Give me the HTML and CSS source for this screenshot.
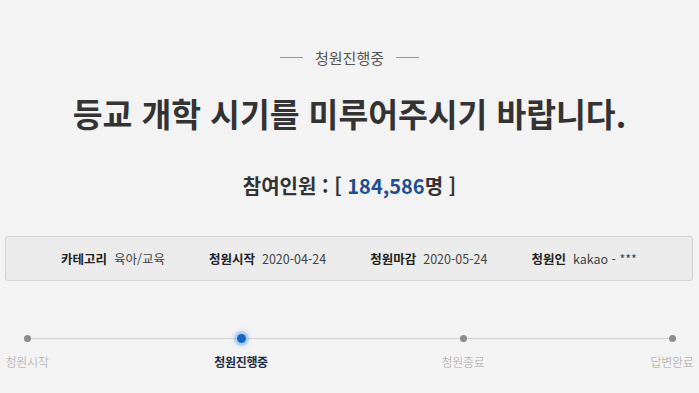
FILE: index.html
```html
<!DOCTYPE html>
<html lang="ko">
<head>
    <meta charset="UTF-8">
    <meta name="viewport" content="width=device-width, initial-scale=1.0">
    <title>청원진행중</title>
    <link rel="stylesheet" href="styles.css">
</head>
<body>
    <div class="petition">
        <div class="status-head">
            <span class="dash"></span>
            <span>청원진행중</span>
            <span class="dash"></span>
        </div>

        <h1 class="title">등교 개학 시기를 미루어주시기 바랍니다.</h1>

        <div class="count">
            참여인원 : [ <span class="num">184,586</span>명 ]
        </div>

        <div class="info">
            <div class="item"><span class="label">카테고리</span><span class="value">육아/교육</span></div>
            <div class="item"><span class="label">청원시작</span><span class="value">2020-04-24</span></div>
            <div class="item"><span class="label">청원마감</span><span class="value">2020-05-24</span></div>
            <div class="item"><span class="label">청원인</span><span class="value">kakao - ***</span></div>
        </div>

        <div class="progress">
            <div class="track"></div>
            <div class="step s1"><span class="dot"></span><span class="name">청원시작</span></div>
            <div class="step s2 active"><span class="dot"></span><span class="name">청원진행중</span></div>
            <div class="step s3"><span class="dot"></span><span class="name">청원종료</span></div>
            <div class="step s4"><span class="dot"></span><span class="name">답변완료</span></div>
        </div>
    </div>
</body>
</html>
```

FILE: styles.css
```css
body {
    margin: 0;
    padding: 0;
    font-family: "Noto Sans CJK KR", "Noto Sans", sans-serif;
    background-color: #f3f3f3;
    color: #333;
    overflow: hidden;
}

.petition {
    width: 699px;
    padding-top: 47px;
    text-align: center;
}

.status-head {
    display: flex;
    justify-content: center;
    align-items: center;
    gap: 12px;
    height: 20px;
    font-size: 15px;
    color: #555;
}

.status-head .dash {
    width: 23px;
    height: 1px;
    background-color: #999;
}

.title {
    margin: 26px 0 0;
    font-size: 32.4px;
    line-height: 40px;
    font-weight: bold;
    color: #333;
}

.count {
    margin-top: 39px;
    font-size: 20px;
    line-height: 28px;
    font-weight: bold;
    color: #333;
}

.count .num {
    color: #1d4f91;
}

.info {
    display: flex;
    justify-content: center;
    align-items: center;
    gap: 44px;
    margin: 36px 6px 0 5px;
    height: 43px;
    border: 1px solid #d3d3d3;
    border-radius: 3px;
    background-color: #ebebeb;
    font-size: 12.5px;
}

.info .item {
    display: flex;
    gap: 7px;
}

.info .label {
    font-weight: bold;
    color: #222;
}

.info .value {
    color: #444;
}

.progress {
    position: relative;
    display: flex;
    margin-top: 52px;
    padding-left: 4px;
}

.progress .track {
    position: absolute;
    left: 27px;
    right: 27px;
    top: 5px;
    height: 1px;
    background-color: #d0d0d0;
}

.step {
    position: relative;
    display: flex;
    flex-direction: column;
    align-items: center;
    width: 46px;
}

.step.s2 { margin-left: 168px; }
.step.s3 { margin-left: 176px; }
.step.s4 { margin-left: 163px; }

.step .dot {
    width: 7px;
    height: 7px;
    margin: 2px 0 1px;
    border-radius: 50%;
    background-color: #8c8c8c;
}

.step.active .dot {
    width: 9px;
    height: 9px;
    margin: 1px 0 0;
    background-color: #1565c8;
    box-shadow: 0 0 0 3px rgba(120, 175, 235, 0.4), 0 0 4px 4px rgba(150, 195, 240, 0.3);
}

.step .name {
    margin-top: 10px;
    font-size: 12px;
    line-height: 18px;
    white-space: nowrap;
    font-weight: 300;
    letter-spacing: -0.3px;
    color: #a4a4a4;
}

.step.active .name {
    font-weight: bold;
    color: #1f2d44;
}
```
